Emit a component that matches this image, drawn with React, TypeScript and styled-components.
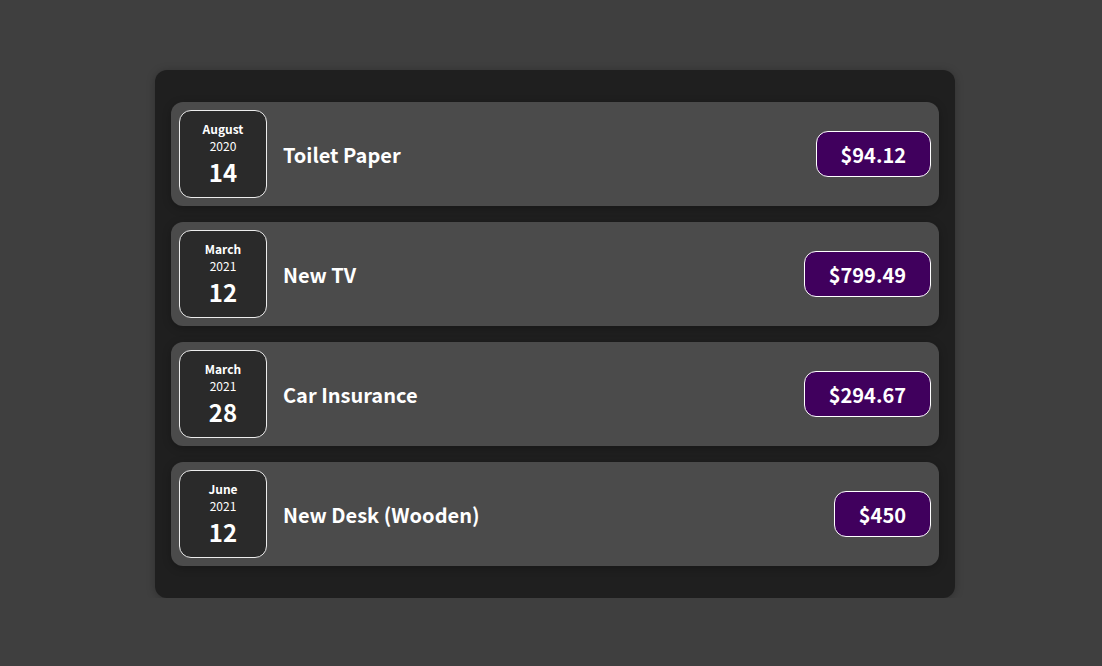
import React from 'react';
import styled, { createGlobalStyle } from 'styled-components';

const GlobalStyle = createGlobalStyle`
    * {
        box-sizing: border-box;
    }
    html, body {
        margin: 0;
        padding: 0;
        background: #3f3f3f;
        font-family: 'Noto Sans CJK JP', 'Noto Sans', sans-serif;
    }
    body {
        padding-left: 8px;
    }
`;

const Expenses = styled.div`
    width: 800px;
    margin: 70px auto 0;
    padding: 32px 16px;
    background-color: #1f1f1f;
    border-radius: 12px;
    box-shadow: 0 1px 8px rgba(0, 0, 0, 0.25);
    display: flex;
    flex-direction: column;
    gap: 16px;
`;

const Item = styled.div`
    display: flex;
    align-items: center;
    justify-content: space-between;
    padding: 8px;
    border-radius: 12px;
    background-color: #4b4b4b;
    box-shadow: 0 2px 8px rgba(0, 0, 0, 0.25);
`;

const DateBox = styled.div`
    display: flex;
    flex-direction: column;
    align-items: center;
    justify-content: center;
    width: 88px;
    height: 88px;
    border: 1px solid #ececec;
    background-color: #2a2a2a;
    color: white;
    border-radius: 12px;
    flex-shrink: 0;
`;

const Month = styled.div`
    font-size: 12px;
    font-weight: bold;
`;

const Year = styled.div`
    font-size: 12px;
`;

const Day = styled.div`
    font-size: 24px;
    font-weight: bold;
`;

const Description = styled.div`
    display: flex;
    flex: 1;
    align-items: center;
    justify-content: space-between;
`;

const Title = styled.h2`
    font-size: 20px;
    font-weight: bold;
    margin: 0 16px;
    color: white;
`;

const Price = styled.div`
    font-size: 20px;
    font-weight: bold;
    color: white;
    background-color: #40005d;
    border: 1px solid white;
    padding: 9px 24px 7px;
    border-radius: 12px;
    line-height: 28px;
`;

const expenses = [
    { month: 'August', year: '2020', day: '14', title: 'Toilet Paper', amount: '$94.12' },
    { month: 'March', year: '2021', day: '12', title: 'New TV', amount: '$799.49' },
    { month: 'March', year: '2021', day: '28', title: 'Car Insurance', amount: '$294.67' },
    { month: 'June', year: '2021', day: '12', title: 'New Desk (Wooden)', amount: '$450' },
];

export default function App() {
    return (
        <>
            <GlobalStyle />
            <Expenses>
                {expenses.map((e) => (
                    <Item key={e.title}>
                        <DateBox>
                            <Month>{e.month}</Month>
                            <Year>{e.year}</Year>
                            <Day>{e.day}</Day>
                        </DateBox>
                        <Description>
                            <Title>{e.title}</Title>
                            <Price>{e.amount}</Price>
                        </Description>
                    </Item>
                ))}
            </Expenses>
        </>
    );
}
